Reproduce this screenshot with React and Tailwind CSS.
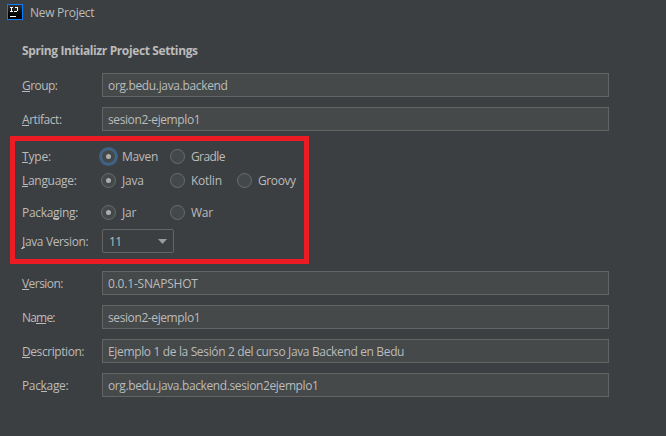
function Label({ before = '', mnemonic, after, className = '' }) {
  return (
    <span className={`block shrink-0 whitespace-pre ${className}`}>
      {before}
      <span className="inline-block h-[14px] border-b border-[#bbbbbb] leading-[15px]">{mnemonic}</span>
      {after}
    </span>
  );
}

function Field({ label, value, valueClass = '' }) {
  return (
    <div className="flex h-6 items-center pl-[22px]">
      <div className="w-20 shrink-0 pt-[2px]">{label}</div>
      <div className="flex h-6 w-[507px] items-center border border-[#646464] bg-[#45494a] pl-[5px] pt-[2px]">
        <span className={`whitespace-pre ${valueClass}`}>{value}</span>
      </div>
    </div>
  );
}

function Radio({ text, checked = false, focused = false, className = '', textClass = '' }) {
  return (
    <div className={`flex shrink-0 items-center ${className}`}>
      <span
        className={`mb-px flex size-[15px] shrink-0 items-center justify-center rounded-full border bg-[#43494a] ${
          focused ? 'border-[#466d94] ring-2 ring-[#3d6185]' : 'border-[#6b6b6b]'
        }`}
      >
        {checked && <span className="size-[5px] rounded-full bg-[#adadad]" />}
      </span>
      <span className={`ml-[6px] whitespace-pre ${textClass}`}>{text}</span>
    </div>
  );
}

function OptionRow({ label, children, className = '' }) {
  return (
    <div className={`flex items-center pl-[7px] ${className}`}>
      <div className="w-[79px] shrink-0">{label}</div>
      {children}
    </div>
  );
}

export default function App() {
  return (
    <div className="flex h-[436px] w-[666px] flex-col overflow-hidden bg-[#3c3f41] font-['Open_Sans','Noto_Sans',sans-serif] text-[12px] leading-[16px] text-[#bbbbbb]">
      <header className="flex h-6 items-center pl-[7px]">
        <svg width="16" height="16" viewBox="0 0 16 16" shapeRendering="crispEdges">
          <defs>
            <linearGradient id="tile" x1="0" y1="0" x2="0" y2="1">
              <stop offset="0" stopColor="#333" />
              <stop offset="0.7" stopColor="#000" />
            </linearGradient>
          </defs>
          <rect width="16" height="16" fill="#087cfa" />
          <rect x="1" y="1" width="14" height="14" fill="url(#tile)" />
          <path d="M3 3.5h3M4.5 3v5M3 7.5h3M8 3.5h3M10.5 3v4M7 7.5h3" stroke="#fff" fill="none" />
          <rect x="3" y="12" width="6" height="1" fill="#fff" />
        </svg>
        <span className="ml-[7px] whitespace-pre pt-[2px] tracking-[-0.27px]">New Project</span>
      </header>
      <h1 className="mt-[19px] h-4 whitespace-pre pl-[22px] font-bold tracking-[-0.38px]">Spring Initializr Project Settings</h1>

      <div className="mt-[14px] flex flex-col gap-[10px]">
        <Field label={<Label mnemonic="G" after="roup:" className="tracking-[-0.55px]" />} value="org.bedu.java.backend" valueClass="tracking-[-0.34px]" />
        <Field label={<Label mnemonic="A" after="rtifact:" className="tracking-[-0.45px]" />} value="sesion2-ejemplo1" valueClass="tracking-[-0.4px]" />
      </div>

      <section className="ml-[10px] mt-[5px] flex h-[128px] w-[299px] flex-col border-[5px] border-[#ed1c24]">
        <OptionRow className="mt-1 h-6" label={<Label mnemonic="T" after="ype:" className="tracking-[-0.2px]" />}>
          <Radio text="Maven" checked focused className="w-[69px]" textClass="tracking-[-0.3px]" />
          <Radio text="Gradle" textClass="tracking-[-0.6px]" />
        </OptionRow>
        <OptionRow className="h-6" label={<Label mnemonic="L" after="anguage:" className="tracking-[-0.3px]" />}>
          <Radio text="Java" checked className="w-[69px]" textClass="tracking-[-0.2px]" />
          <Radio text="Kotlin" className="w-[67px]" textClass="tracking-[-0.25px]" />
          <Radio text="Groovy" textClass="tracking-[-0.4px]" />
        </OptionRow>
        <OptionRow className="mt-2 h-6" label={<Label before="Packa" mnemonic="g" after="ing:" className="tracking-[-0.3px]" />}>
          <Radio text="Jar" checked className="w-[69px]" textClass="tracking-[-0.2px]" />
          <Radio text="War" textClass="tracking-[-0.3px]" />
        </OptionRow>
        <OptionRow className="mt-1 h-6" label={<Label mnemonic="J" after="ava Version:" className="pt-[2px] tracking-[-0.36px]" />}>
          <div className="ml-px flex h-6 w-[72px] items-center justify-between rounded-[2px] border border-[#646464] pl-[6px] pr-[6px]">
            <span className="pt-[2px] tracking-[-0.5px]">11</span>
            <svg width="9" height="5" viewBox="0 0 9 5">
              <path d="M0 0h9L4.5 5z" fill="#9a9da0" />
            </svg>
          </div>
        </OptionRow>
      </section>

      <div className="mt-[7px] flex flex-col gap-[10px]">
        <Field label={<Label mnemonic="V" after="ersion:" className="tracking-[-0.55px]" />} value="0.0.1-SNAPSHOT" valueClass="tracking-[-0.2px]" />
        <Field label={<Label before="Na" mnemonic="m" after="e:" className="tracking-[-0.8px]" />} value="sesion2-ejemplo1" valueClass="tracking-[-0.4px]" />
        <Field label={<Label mnemonic="D" after="escription:" className="tracking-[-0.43px]" />} value="Ejemplo 1 de la Sesión 2 del curso Java Backend en Bedu" valueClass="tracking-[-0.35px]" />
        <Field label={<Label before="Pac" mnemonic="k" after="age:" className="tracking-[-0.35px]" />} value="org.bedu.java.backend.sesion2ejemplo1" valueClass="tracking-[-0.38px]" />
      </div>
    </div>
  );
}
